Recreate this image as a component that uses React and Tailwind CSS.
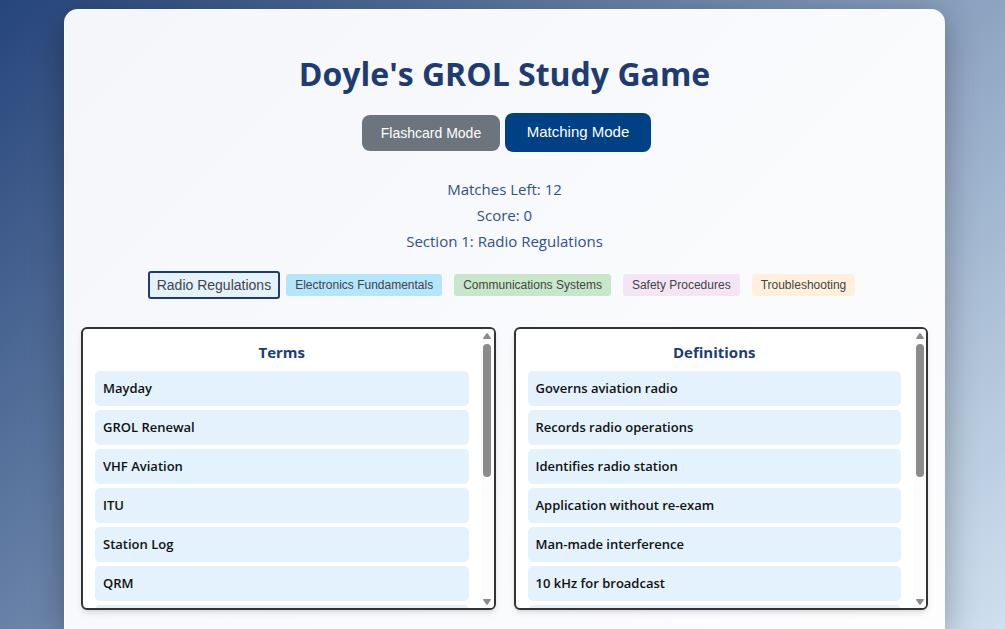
import React, { useState } from 'react';
import clsx from 'clsx';

const sections = [
  { name: 'Radio Regulations', color: 'bg-[#e3f2fd]' },
  { name: 'Electronics Fundamentals', color: 'bg-[#b3e5fc]' },
  { name: 'Communications Systems', color: 'bg-[#c8e6c9]' },
  { name: 'Safety Procedures', color: 'bg-[#f3e5f5]' },
  { name: 'Troubleshooting', color: 'bg-[#fff0dc]' }
];

const terms = ['Mayday', 'GROL Renewal', 'VHF Aviation', 'ITU', 'Station Log', 'QRM', ''];

const definitions = [
  'Governs aviation radio',
  'Records radio operations',
  'Identifies radio station',
  'Application without re-exam',
  'Man-made interference',
  '10 kHz for broadcast',
  ''
];

const ModeButton = ({ active, children, ...props }) => (
  <button
    type="button"
    className={clsx(
      'rounded-lg text-white',
      active
        ? 'h-[39px] w-[146px] bg-[#004085] text-[15px]'
        : 'h-9 w-[138px] bg-[#6c757d] text-sm'
    )}
    {...props}
  >
    {children}
  </button>
);

const Arrow = ({ down }) => (
  <svg viewBox="0 0 8 6" className="h-[6px] w-2 shrink-0" aria-hidden="true">
    <path
      d={down ? 'M0.7 0h6.6q.9.1.5.9L4.7 5.5q-.7.9-1.4 0L.2.9Q-.2.1.7 0z' : 'M.7 6h6.6q.9-.1.5-.9L4.7.5Q4-.4 3.3.5L.2 5.1Q-.2 5.9.7 6z'}
      fill="#8b8b8b"
    />
  </svg>
);

const Scrollbar = () => (
  <div className="flex w-[13px] shrink-0 flex-col items-center bg-[#fcfcfc] pt-1 pb-[3px]">
    <Arrow />
    <div className="mt-[5px] h-[133px] w-2 rounded-full bg-[#8b8b8b]" />
    <div className="flex-1" />
    <Arrow down />
  </div>
);

const Column = ({ title, items }) => (
  <section className="flex h-[283px] flex-1 overflow-hidden rounded-md border-2 border-[#333] bg-white shadow-md">
    <div className="flex-1 px-3 pt-3">
      <h2 className="mb-2 text-center text-[15px] leading-[22px] font-bold text-[#1e3c72]">
        {title}
      </h2>
      <ul className="flex flex-col gap-1">
        {items.map((item, i) => (
          <li
            key={i}
            className="flex h-[35px] shrink-0 items-center rounded-[5px] bg-[#e3f2fd] px-2 text-[13px] font-semibold text-[#111]"
          >
            {item}
          </li>
        ))}
      </ul>
    </div>
    <Scrollbar />
  </section>
);

export default function App() {
  const [mode, setMode] = useState('matching');
  const [section, setSection] = useState(0);

  return (
    <div className="flex h-screen overflow-hidden bg-[linear-gradient(135deg,#26457a,#cfe0ef)] pt-[9px] pr-[60px] pl-16 font-['Open_Sans',sans-serif]">
      <main className="flex-1 rounded-t-[14px] border border-b-0 border-white/40 bg-[linear-gradient(135deg,#f4f6fa,#fdfdfe)] px-4 pt-10 shadow-[0_8px_32px_rgba(0,0,0,0.3)]">
        <h1 className="text-center text-[32px] leading-[48px] font-bold text-[#1e3c72]">
          Doyle's GROL Study Game
        </h1>

        <div className="mt-[15px] flex items-center justify-center gap-[5px] pl-1 font-['Liberation_Sans',sans-serif]">
          <ModeButton active={mode === 'flashcard'} onClick={() => setMode('flashcard')}>
            Flashcard Mode
          </ModeButton>
          <ModeButton active={mode === 'matching'} onClick={() => setMode('matching')}>
            Matching Mode
          </ModeButton>
        </div>

        <div className="mt-6 text-center text-[15px] leading-[26px] text-[#2f528c]">
          <p>Matches Left: 12</p>
          <p>Score: 0</p>
          <p>Section 1: {sections[0].name}</p>
        </div>

        <nav className="mt-[17px] flex items-center justify-center font-['Liberation_Sans',sans-serif] text-[#444]">
          {sections.map((s, i) => (
            <button
              key={s.name}
              type="button"
              onClick={() => setSection(i)}
              className={clsx(
                'rounded-[3px]',
                s.color,
                section === i
                  ? 'h-7 border-2 border-[#1e3c72] px-[7px] text-sm'
                  : 'mx-1.5 h-[22px] px-[9px] text-xs'
              )}
            >
              {s.name}
            </button>
          ))}
        </nav>

        <div className="mt-7 flex gap-[18px]">
          <Column title="Terms" items={terms} />
          <Column title="Definitions" items={definitions} />
        </div>
      </main>
    </div>
  );
}
